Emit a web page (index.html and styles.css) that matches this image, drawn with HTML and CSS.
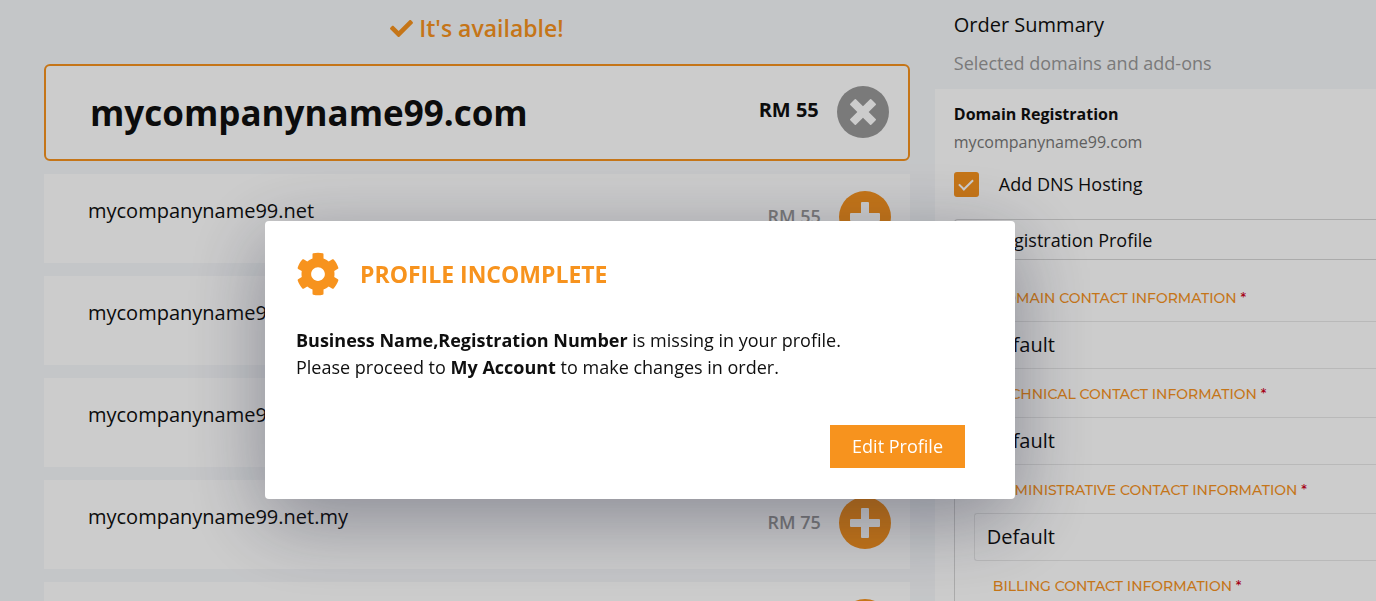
FILE: index.html
```html
<!DOCTYPE html>
<html lang="en">
<head>
    <meta charset="UTF-8">
    <meta name="viewport" content="width=device-width, initial-scale=1.0">
    <title>Domain Search</title>
    <link rel="stylesheet" href="styles.css">
</head>
<body>
    <svg class="sprite" aria-hidden="true">
        <symbol id="icon-plus" viewBox="0 0 30 30">
            <path d="M12 0h6a1 1 0 0 1 1 1v10h10a1 1 0 0 1 1 1v6a1 1 0 0 1-1 1H19v10a1 1 0 0 1-1 1h-6a1 1 0 0 1-1-1V19H1a1 1 0 0 1-1-1v-6a1 1 0 0 1 1-1h10V1a1 1 0 0 1 1-1z"/>
        </symbol>
        <symbol id="icon-check" viewBox="0 0 512 512">
            <path d="M173.898 439.404l-166.4-166.4c-9.997-9.997-9.997-26.206 0-36.204l36.203-36.204c9.997-9.998 26.207-9.998 36.204 0L192 312.69 432.095 72.596c9.997-9.997 26.207-9.997 36.204 0l36.203 36.204c9.997 9.997 9.997 26.206 0 36.204l-294.4 294.401c-9.998 9.997-26.207 9.997-36.204-.001z"/>
        </symbol>
        <symbol id="icon-cog" viewBox="0 0 512 512">
            <path d="M487.4 315.7l-42.6-24.6c4.3-23.2 4.3-47 0-70.2l42.6-24.6c4.9-2.8 7.1-8.6 5.5-14-11.1-35.6-30-67.8-54.7-94.6-3.8-4.1-10-5.1-14.8-2.3L380.8 110c-17.9-15.4-38.5-27.3-60.8-35.1V25.8c0-5.6-3.9-10.5-9.4-11.7-36.7-8.2-74.3-7.8-109.2 0-5.5 1.2-9.4 6.1-9.4 11.7V75c-22.2 7.9-42.8 19.8-60.8 35.1L88.7 85.5c-4.9-2.8-11-1.9-14.8 2.3-24.7 26.7-43.6 58.9-54.7 94.6-1.7 5.4.6 11.2 5.5 14L67.3 221c-4.3 23.2-4.3 47 0 70.2l-42.6 24.6c-4.9 2.8-7.1 8.6-5.5 14 11.1 35.6 30 67.8 54.7 94.6 3.8 4.1 10 5.1 14.8 2.3l42.6-24.6c17.9 15.4 38.5 27.3 60.8 35.1v49.2c0 5.6 3.9 10.5 9.4 11.7 36.7 8.2 74.3 7.8 109.2 0 5.5-1.2 9.4-6.1 9.4-11.7v-49.2c22.2-7.9 42.8-19.8 60.8-35.1l42.6 24.6c4.9 2.8 11 1.9 14.8-2.3 24.7-26.7 43.6-58.9 54.7-94.6 1.5-5.5-.7-11.3-5.6-14.1zM256 336c-44.1 0-80-35.9-80-80s35.9-80 80-80 80 35.9 80 80-35.9 80-80 80z"/>
        </symbol>
    </svg>

    <div class="page">
        <main class="results">
            <h2 class="available"><svg class="available-icon"><use href="#icon-check"/></svg> It's available!</h2>

            <div class="domain-featured">
                <h1 class="featured-name">mycompanyname99.com</h1>
                <span class="featured-price">RM 55</span>
                <button type="button" class="round-btn remove" aria-label="Remove"><svg><use href="#icon-plus"/></svg></button>
            </div>

            <ul class="domain-list">
                <li class="domain-row">
                    <span class="name">mycompanyname99.net</span>
                    <span class="price">RM 55</span>
                    <button type="button" class="round-btn" aria-label="Add"><svg><use href="#icon-plus"/></svg></button>
                </li>
                <li class="domain-row">
                    <span class="name">mycompanyname99.org</span>
                    <button type="button" class="round-btn" aria-label="Add"><svg><use href="#icon-plus"/></svg></button>
                </li>
                <li class="domain-row">
                    <span class="name">mycompanyname99.my</span>
                    <button type="button" class="round-btn" aria-label="Add"><svg><use href="#icon-plus"/></svg></button>
                </li>
                <li class="domain-row">
                    <span class="name">mycompanyname99.net.my</span>
                    <span class="price">RM 75</span>
                    <button type="button" class="round-btn" aria-label="Add"><svg><use href="#icon-plus"/></svg></button>
                </li>
                <li class="domain-row">
                    <span class="name"></span>
                    <button type="button" class="round-btn" aria-label="Add"><svg><use href="#icon-plus"/></svg></button>
                </li>
            </ul>
        </main>

        <aside class="summary">
            <header class="summary-head">
                <h2>Order Summary</h2>
                <p>Selected domains and add-ons</p>
            </header>
            <div class="summary-body">
                <h3>Domain Registration</h3>
                <p class="summary-domain">mycompanyname99.com</p>
                <div class="dns">
                    <input type="checkbox" id="dns" checked>
                    <label for="dns">Add DNS Hosting</label>
                </div>
                <section class="profile">
                    <h4>Registration Profile</h4>
                    <div class="field">
                        <label for="domainContact">DOMAIN CONTACT INFORMATION <span>*</span></label>
                        <select id="domainContact"><option>Default</option></select>
                    </div>
                    <div class="field">
                        <label for="technicalContact">TECHNICAL CONTACT INFORMATION <span>*</span></label>
                        <select id="technicalContact"><option>Default</option></select>
                    </div>
                    <div class="field">
                        <label for="adminContact">ADMINISTRATIVE CONTACT INFORMATION <span>*</span></label>
                        <select id="adminContact"><option>Default</option></select>
                    </div>
                    <div class="field">
                        <label for="billingContact">BILLING CONTACT INFORMATION <span>*</span></label>
                        <select id="billingContact"><option>Default</option></select>
                    </div>
                </section>
            </div>
        </aside>
    </div>

    <div class="overlay">
        <div class="modal" role="dialog" aria-modal="true" aria-labelledby="modal-title">
            <div class="modal-title">
                <svg><use href="#icon-cog"/></svg>
                <h2 id="modal-title">PROFILE INCOMPLETE</h2>
            </div>
            <p class="modal-text">
                <strong>Business Name,Registration Number</strong> is missing in your profile.<br>
                Please proceed to <strong>My Account</strong> to make changes in order.
            </p>
            <div class="modal-actions">
                <button type="button" class="edit-btn">Edit Profile</button>
            </div>
        </div>
    </div>
</body>
</html>
```

FILE: styles.css
```css
* {
    box-sizing: border-box;
}
body {
    margin: 0;
    height: 100vh;
    overflow: hidden;
    font-family: "Open Sans", "Noto Sans", sans-serif;
    font-size: 18px;
    color: #0f0f0f;
    background-color: #f6f8fa;
}
h1, h2, h3, h4, p, ul {
    margin: 0;
    padding: 0;
}
button, select {
    font-family: inherit;
}
.sprite {
    display: none;
}
.page {
    display: grid;
    grid-template-columns: 65% 1fr;
    gap: 25px;
    padding-left: 44px;
}

/* Search results */
.available {
    display: flex;
    align-items: center;
    justify-content: center;
    gap: 6px;
    height: 64px;
    padding-bottom: 8px;
    font-size: 23px;
    font-weight: 600;
    color: #f7931e;
}
.available-icon {
    width: 23px;
    height: 23px;
    fill: #f7931e;
}
.domain-featured {
    display: flex;
    align-items: center;
    height: 97px;
    margin-bottom: 13px;
    padding: 0 19px 1px 44px;
    border: 2px solid #f7931e;
    border-radius: 6px;
    background: #fff;
}
.featured-name {
    flex: 1;
    font-size: 35px;
    font-weight: 700;
}
.featured-price {
    margin-right: 18px;
    padding-bottom: 5px;
    font-size: 20px;
    font-weight: 700;
}
.domain-list {
    display: grid;
    gap: 13px;
    list-style: none;
}
.domain-row {
    display: flex;
    align-items: center;
    height: 89px;
    padding: 0 19px 3px 44px;
    background: #fff;
}
.name {
    flex: 1;
    padding-bottom: 14px;
    font-size: 20px;
}
.price {
    margin-right: 18px;
    padding-bottom: 2px;
    font-weight: 600;
    color: #999;
}
.round-btn {
    display: flex;
    align-items: center;
    justify-content: center;
    width: 52px;
    height: 52px;
    padding: 0;
    border: none;
    border-radius: 50%;
    background: #f7931e;
    cursor: pointer;
}
.round-btn svg {
    width: 30px;
    height: 30px;
    fill: #fff;
}
.round-btn.remove {
    background: #999;
}
.round-btn.remove svg {
    transform: rotate(45deg);
}

/* Order summary */
.summary-head {
    height: 89px;
    padding: 11px 0 0 19px;
}
.summary-head h2 {
    font-size: 20px;
    font-weight: 400;
    line-height: 28px;
}
.summary-head p {
    margin-top: 11px;
    line-height: 26px;
    color: #999;
}
.summary-body {
    padding: 13px 0 0 19px;
    background: #fff;
}
.summary-body h3 {
    font-size: 16px;
    font-weight: 700;
    line-height: 24px;
}
.summary-domain {
    margin-top: 4px;
    font-size: 16px;
    line-height: 24px;
    color: #777;
}
.dns {
    display: flex;
    align-items: center;
    gap: 20px;
    margin: 18px 0 22px;
    line-height: 25px;
}
.dns input {
    appearance: none;
    display: grid;
    place-content: center;
    width: 25px;
    height: 25px;
    margin: 0;
    border-radius: 3px;
    background: #f7931e;
}
.dns input:checked::before {
    content: "";
    width: 6px;
    height: 12px;
    margin-bottom: 3px;
    border: solid #fff;
    border-width: 0 2px 2px 0;
    transform: rotate(45deg);
}
.profile {
    border: 1px solid #d6d6d6;
    border-right: none;
    border-radius: 4px 0 0 0;
}
.profile h4 {
    padding: 1px 0 0 38px;
    border-bottom: 1px solid #d6d6d6;
    font-size: 18px;
    font-weight: 400;
    line-height: 38px;
    margin-bottom: 13px;
}
.field {
    padding-left: 19px;
}
.field label {
    display: block;
    padding: 2px 0 0 19px;
    font-family: Montserrat, "DejaVu Sans", sans-serif;
    font-size: 14px;
    font-weight: 500;
    line-height: 46px;
    color: #f7931e;
}
.field label span {
    color: #d0021b;
}
.field select {
    display: block;
    appearance: none;
    width: 100%;
    height: 48px;
    padding: 0 12px 2px;
    border: 1px solid #e8e8e8;
    border-right: none;
    border-radius: 3px 0 0 3px;
    background: #fff;
    font-size: 20px;
    color: #0f0f0f;
}

/* Modal */
.overlay {
    position: fixed;
    inset: 0;
    display: flex;
    align-items: flex-start;
    justify-content: center;
    padding: 221px 96px 0 0;
    background: rgba(0, 0, 0, 0.2);
}
.modal {
    width: 750px;
    max-width: 100%;
    padding: 31px 50px 31px 31px;
    border-radius: 4px;
    background: #fff;
    box-shadow: 0 20px 80px rgba(15, 20, 45, 0.37);
}
.modal-title {
    display: flex;
    align-items: center;
    gap: 20px;
    color: #f7931e;
}
.modal-title svg {
    width: 44px;
    height: 44px;
    fill: #f7931e;
}
.modal-title h2 {
    font-size: 23px;
    font-weight: 700;
}
.modal-text {
    margin: 31px 0 44px;
    line-height: 27px;
}
.modal-actions {
    display: flex;
    justify-content: flex-end;
}
.edit-btn {
    height: 43px;
    padding: 0 22px 1px;
    border: none;
    background: #f7931e;
    color: #fff;
    font-size: 18px;
    cursor: pointer;
}
```
